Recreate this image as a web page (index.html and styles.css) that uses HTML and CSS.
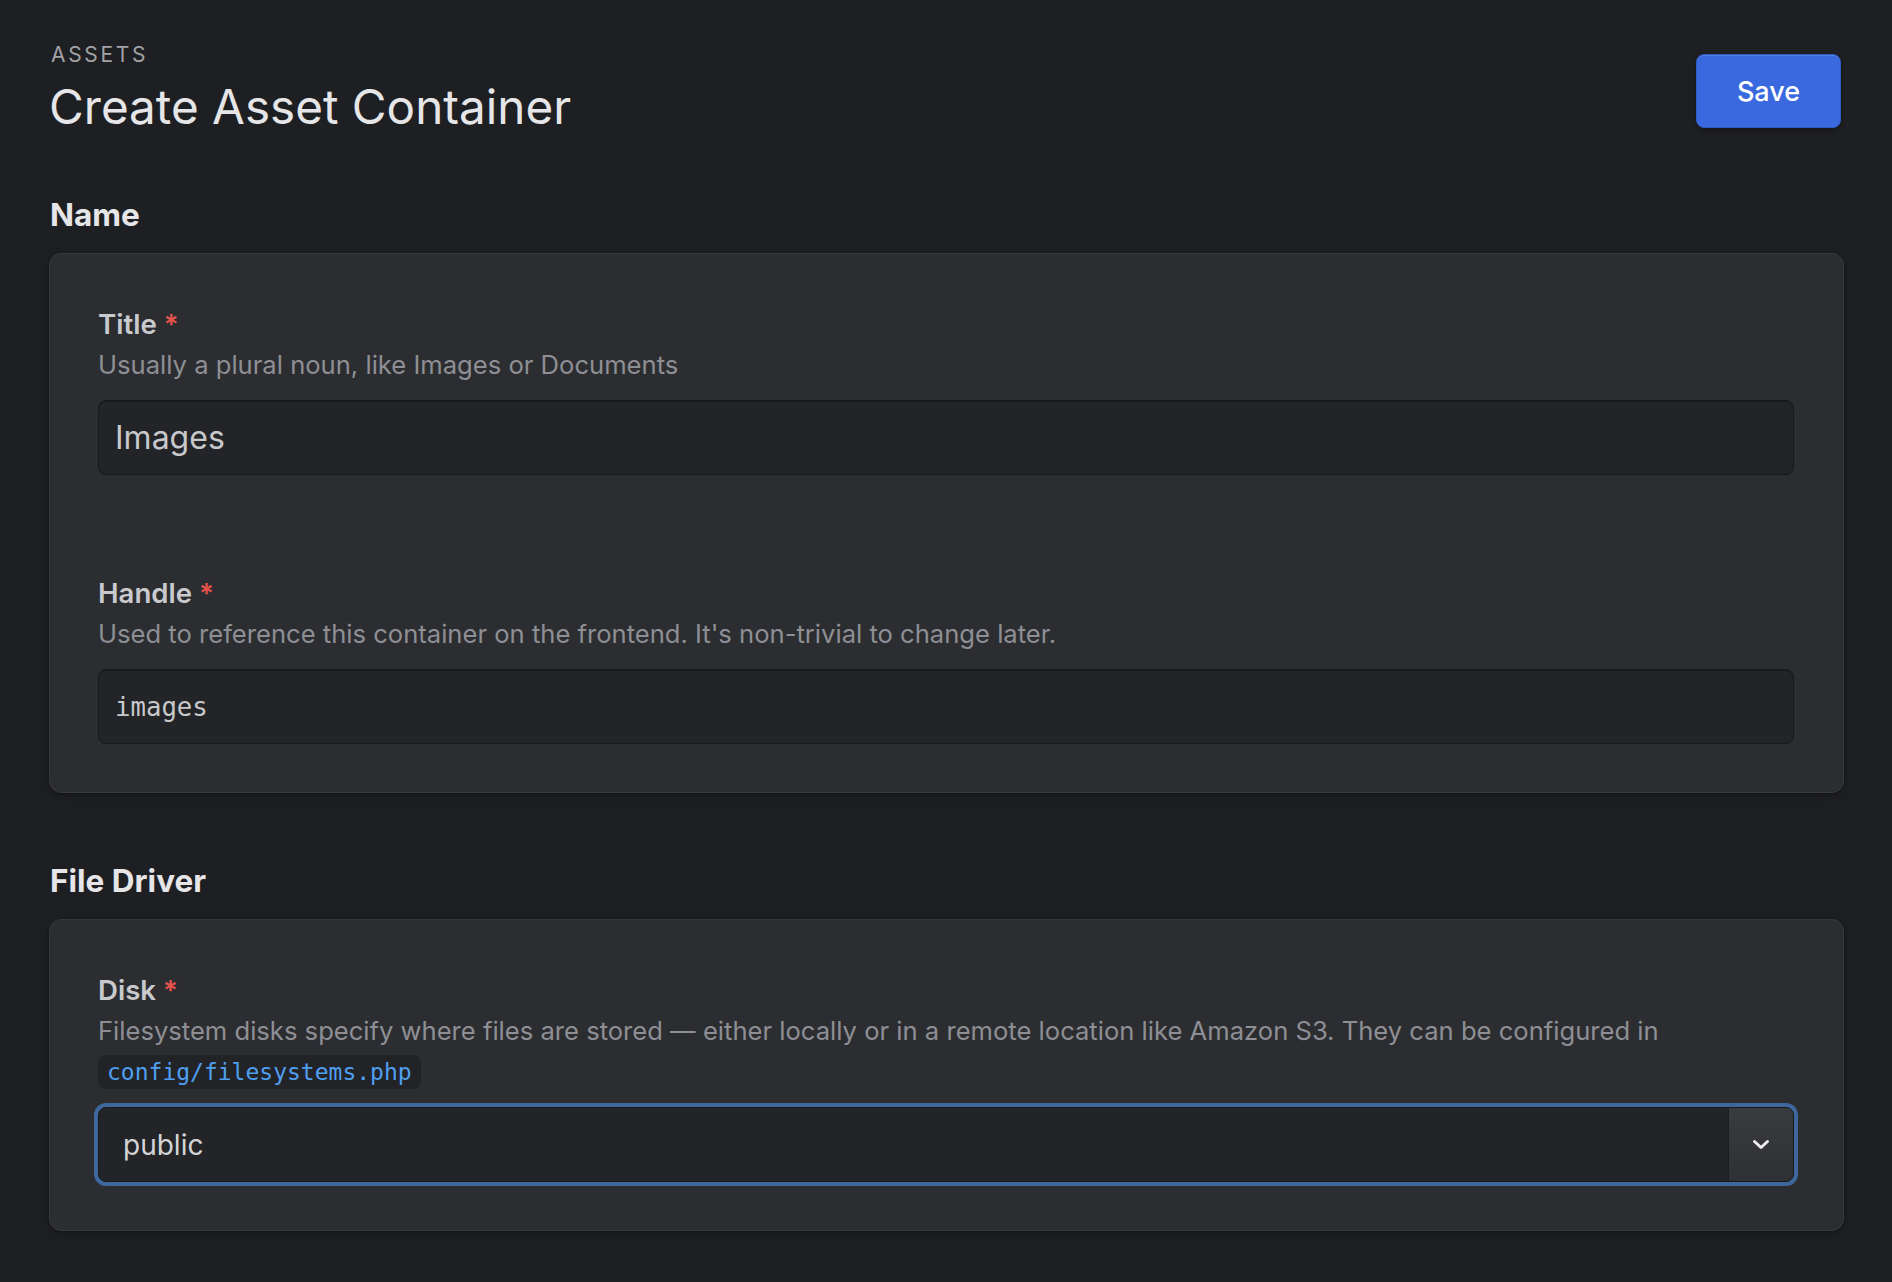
FILE: index.html
```html
<!DOCTYPE html>
<html lang="en">
<head>
<meta charset="utf-8">
<title>Create Asset Container</title>
<link rel="stylesheet" href="styles.css">
</head>
<body>
<div class="page">
  <header class="page-header">
    <div class="titles">
      <div class="eyebrow">Assets</div>
      <h1 class="page-title">Create Asset Container</h1>
    </div>
    <button class="btn-primary" type="button">Save</button>
  </header>

  <section class="section">
    <h2 class="section-title">Name</h2>
    <div class="card">
      <div class="field">
        <div class="field-label">Title <span class="req">*</span></div>
        <div class="field-help">Usually a plural noun, like Images or Documents</div>
        <div class="text-input">Images</div>
      </div>
      <div class="field">
        <div class="field-label">Handle <span class="req">*</span></div>
        <div class="field-help">Used to reference this container on the frontend. It's non-trivial to change later.</div>
        <div class="text-input mono">images</div>
      </div>
    </div>
  </section>

  <section class="section">
    <h2 class="section-title">File Driver</h2>
    <div class="card">
      <div class="field">
        <div class="field-label">Disk <span class="req">*</span></div>
        <div class="field-help">Filesystem disks specify where files are stored — either locally or in a remote location like Amazon S3. They can be configured in <code class="code">config/filesystems.php</code></div>
        <div class="select">
          <div class="select-value">public</div>
          <div class="select-btn">
            <svg width="18" height="11" viewBox="0 0 18 11" aria-hidden="true"><path d="M2.5 2.5 L9 8.5 L15.5 2.5" fill="none" stroke="#ececee" stroke-width="3" stroke-linecap="round" stroke-linejoin="round"/></svg>
          </div>
        </div>
      </div>
    </div>
  </section>
</div>
</body>
</html>
```

FILE: styles.css
```css
* { box-sizing: border-box; }

html, body {
  margin: 0;
  background: #1e1f22;
}

body {
  font-family: Inter, "Noto Sans", "Liberation Sans", sans-serif;
  color: #e4e4e7;
}

.page {
  display: flex;
  flex-direction: column;
  padding: 40px 48px 40px 49px;
}

.page-header {
  display: flex;
  justify-content: space-between;
  align-items: flex-start;
  margin-bottom: 58px;
}

.eyebrow {
  font-size: 21px;
  line-height: 30px;
  letter-spacing: 2.7px;
  text-transform: uppercase;
  color: #a2a2a7;
  padding-left: 2px;
}

.page-title {
  margin: 7px 0 0;
  font-size: 47.6px;
  line-height: 60px;
  font-weight: 400;
  color: #e6e6e9;
}

.btn-primary {
  margin: 14px 3px 0 0;
  width: 145px;
  height: 74px;
  border: 1px solid #2e5cc6;
  border-radius: 8px;
  background: #3a68de;
  color: #ffffff;
  font-family: Inter, "Noto Sans", sans-serif;
  font-size: 27px;
  font-weight: 500;
  box-shadow: inset 0 1px 0 rgba(255, 255, 255, 0.14), 0 2px 5px rgba(0, 0, 0, 0.35);
  cursor: pointer;
}

.section + .section {
  margin-top: 68px;
}

.section-title {
  margin: 0 0 18px;
  padding-left: 1px;
  font-size: 31.5px;
  line-height: 40px;
  font-weight: 700;
  color: #e6e6e9;
}

.card {
  display: flex;
  flex-direction: column;
  gap: 98px;
  background: #2c2d31;
  border: 1px solid #38393d;
  border-radius: 12px;
  padding: 50px 49px 48px 48px;
  box-shadow: 0 1px 3px rgba(0, 0, 0, 0.3), 0 4px 16px rgba(0, 0, 0, 0.15);
}

.field {
  display: flex;
  flex-direction: column;
}

.field-label {
  font-size: 27.6px;
  line-height: 40px;
  font-weight: 600;
  color: #c9cacd;
}

.req {
  color: #e5534b;
}

.field-help {
  font-size: 25.6px;
  line-height: 40px;
  padding-top: 1px;
  color: #8e8f94;
  margin-bottom: 15px;
}

.code {
  font-family: "DejaVu Sans Mono", "Liberation Mono", monospace;
  font-size: 23px;
  color: #4f9ff0;
  background: #222327;
  padding: 4px 9px;
  border-radius: 8px;
}

.text-input {
  height: 75px;
  display: flex;
  align-items: center;
  padding: 0 16px;
  background: #232427;
  border: 1px solid #18191b;
  border-radius: 8px;
  box-shadow: inset 0 1px 1px rgba(0, 0, 0, 0.25);
  font-size: 32px;
  color: #c8c9cc;
}

.text-input.mono {
  font-family: "DejaVu Sans Mono", "Liberation Mono", monospace;
  font-size: 25.7px;
}

.select {
  height: 75px;
  display: flex;
  background: #232427;
  border: 1px solid #18191b;
  border-radius: 8px;
  box-shadow: 0 0 0 4px #3e679d;
}

.select-value {
  flex: 1;
  display: flex;
  align-items: center;
  padding-left: 24px;
  font-size: 28px;
  color: #d4d4d8;
}

.select-btn {
  width: 65px;
  display: flex;
  align-items: center;
  justify-content: center;
  border-left: 1px solid #1c1d1f;
  border-radius: 0 7px 7px 0;
  background: linear-gradient(#393b3f, #2e3034);
}
```
